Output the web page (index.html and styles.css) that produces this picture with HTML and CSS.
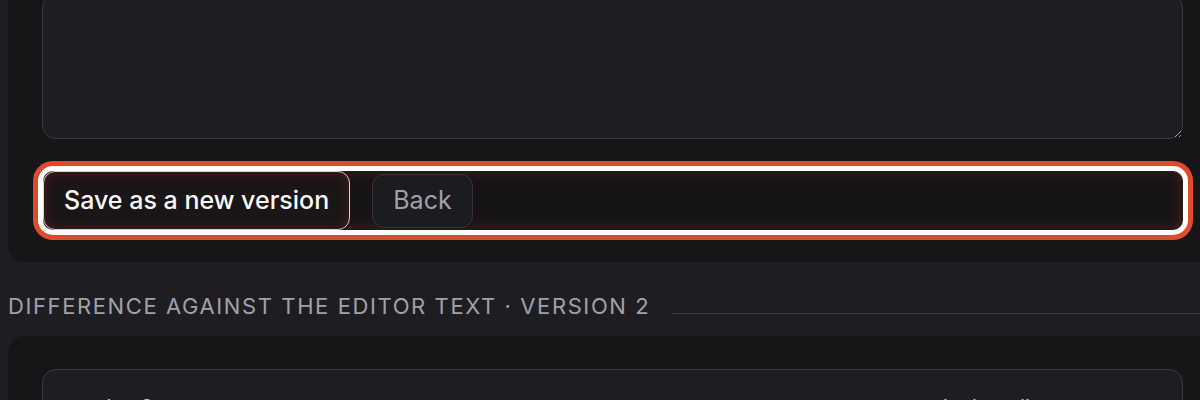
FILE: index.html
```html
<!DOCTYPE html>
<html lang="en">
<head>
<meta charset="utf-8">
<title>Edit version</title>
<link rel="stylesheet" href="styles.css">
</head>
<body>
<div class="page">
  <section class="card card-top">
    <textarea class="editor" aria-label="Text"></textarea>
    <div class="actions highlighted">
      <button class="btn btn-primary" type="button">Save as a new version</button>
      <button class="btn btn-ghost" type="button">Back</button>
    </div>
  </section>

  <div class="section-head">
    <h2 class="section-title">Difference against the editor text · version 2</h2>
    <div class="section-rule"></div>
  </div>

  <section class="card card-diff">
    <div class="diff-box">
      <div class="diff-labels">
        <span class="diff-label">version 2</span>
        <span class="diff-label diff-label-right">in the editor</span>
      </div>
    </div>
  </section>
</div>
</body>
</html>
```

FILE: styles.css
```css
html, body {
  margin: 0;
  padding: 0;
  overflow: hidden;
  background: #1e1e22;
  height: 400px;
}

body {
  font-family: Inter, "Noto Sans", "Liberation Sans", sans-serif;
  color: #e4e4e7;
}

.page {
  width: 1209px;
  padding-left: 8px;
}

.card {
  background: #161618;
  border-radius: 16px;
  padding: 0 34px;
}

.card-top {
  margin-top: -40px;
  padding-top: 34px;
  padding-bottom: 32px;
}

.editor {
  display: block;
  box-sizing: border-box;
  width: 100%;
  height: 145px;
  margin: 0;
  background: #1e1e22;
  border: 1px solid #3a3a40;
  border-radius: 14px;
  color-scheme: dark;
  resize: vertical;
  outline: none;
  color: #e4e4e7;
  font: inherit;
}

.actions {
  margin-top: 32px;
  margin-left: 1px;
  display: flex;
  align-items: center;
  gap: 22px;
  height: 59px;
  border-radius: 10px;
  background: #171416;
  box-shadow:
    inset 0 0 14px rgba(190, 60, 40, 0.28),
    0 0 0 5px #ffffff,
    0 0 0 10px #e0492d;
}

.btn {
  font-family: Inter, "Noto Sans", "Liberation Sans", sans-serif;
  font-size: 25px;
  line-height: 1;
  border-radius: 12px;
  cursor: pointer;
}

.btn-primary {
  height: 59px;
  padding: 0 20px;
  color: #f7f7f8;
  font-weight: 500;
  background: #1a1517;
  border: 1px solid #d9d1cd;
  box-shadow: inset 0 0 12px rgba(170, 50, 40, 0.35);
}

.btn-ghost {
  height: 54px;
  padding: 0 20px;
  color: #a1a1aa;
  font-weight: 400;
  background: #1c1b1f;
  border: 1px solid #34343a;
}

.section-head {
  display: flex;
  align-items: flex-end;
  gap: 22px;
  margin-top: 29px;
  height: 30px;
}

.section-title {
  margin: 0;
  font-size: 22px;
  font-weight: 400;
  letter-spacing: 1.6px;
  text-transform: uppercase;
  color: #a1a1aa;
  white-space: nowrap;
  line-height: 30px;
}

.section-rule {
  flex: 1;
  height: 1px;
  background: #3a3a40;
  margin-bottom: 7px;
}

.card-diff {
  margin-top: 15px;
  padding-top: 33px;
  height: 200px;
}

.diff-box {
  background: #1e1e22;
  border: 1px solid #3a3a40;
  border-radius: 14px;
  height: 200px;
  padding: 25px 23px;
}

.diff-labels {
  display: flex;
  font-size: 20px;
  line-height: 24px;
  color: #c4c4cc;
}

.diff-label-right {
  margin-left: 790px;
}
```
